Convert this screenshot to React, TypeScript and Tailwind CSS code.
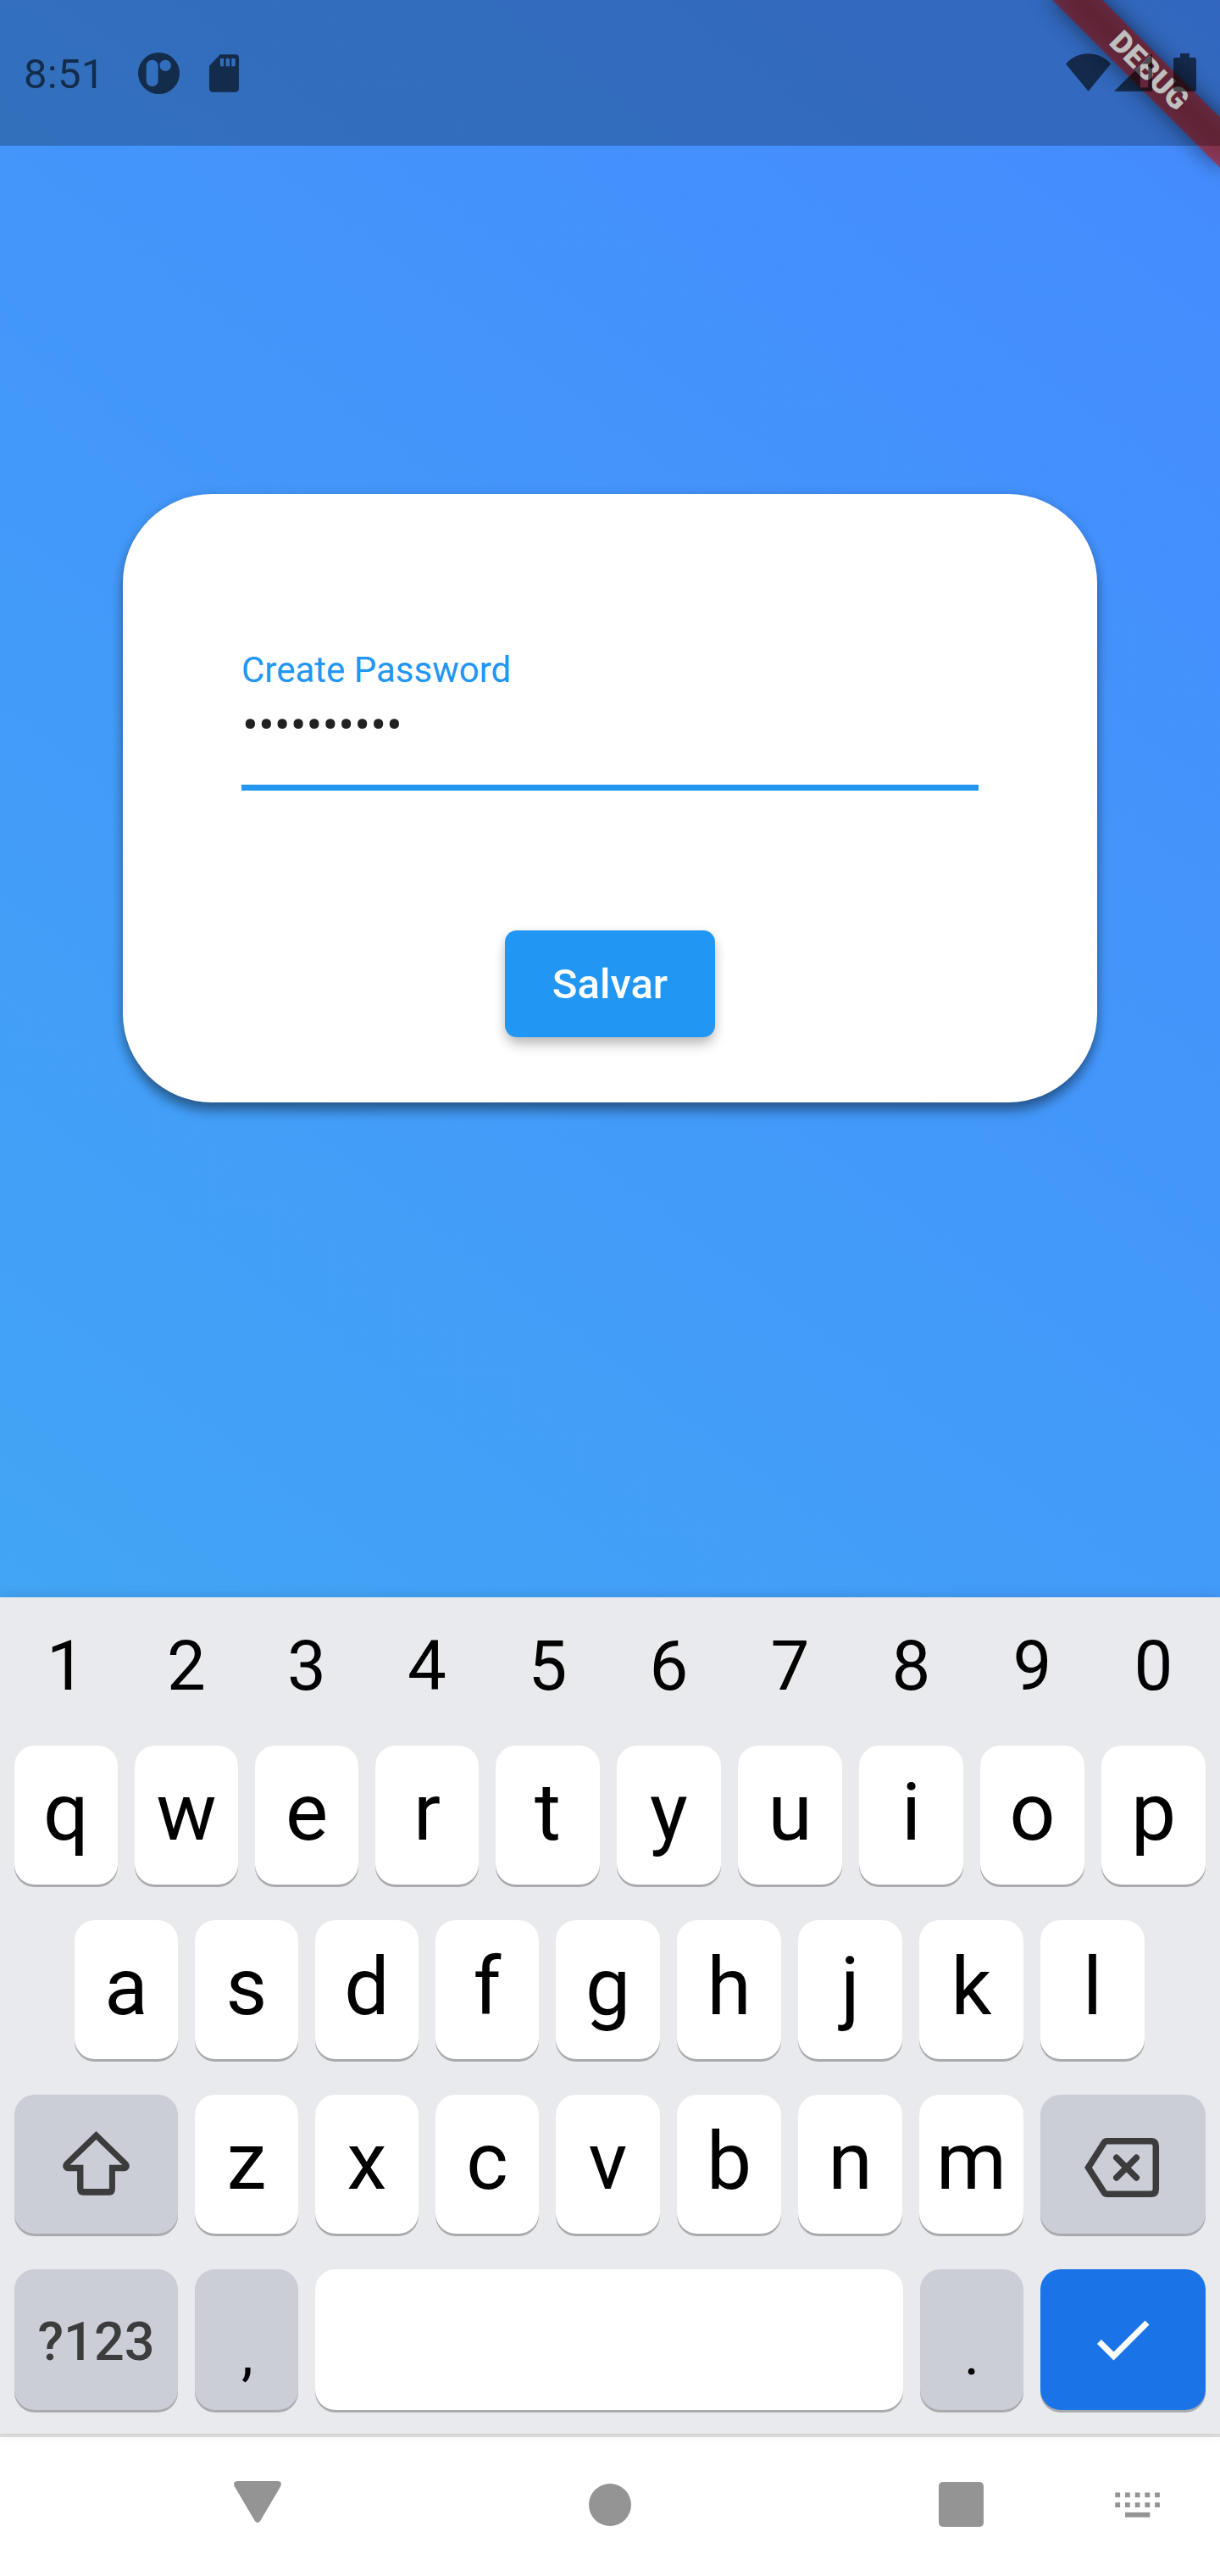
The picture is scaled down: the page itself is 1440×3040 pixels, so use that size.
import type { ReactNode } from "react";

const font = "font-['Roboto',sans-serif]";

type KeyTone = "light" | "gray" | "blue";

const tones: Record<KeyTone, string> = {
  light: "bg-white text-black",
  gray: "bg-[#cbced7] text-[#3c3c3c]",
  blue: "bg-[#1b73e8] text-white",
};

const NARROW = "w-[122px] shrink-0";
const WIDE = "w-[123px] shrink-0";

function Key({ children, tone = "light", size = "flex-1" }: { children?: ReactNode; tone?: KeyTone; size?: string }) {
  return (
    <div
      className={`flex h-full min-w-0 items-center justify-center rounded-3xl shadow-[0_3px_0_#a9aaad] ${tones[tone]} ${size}`}
    >
      {children}
    </div>
  );
}

function Letter({ children }: { children: string }) {
  return <span className="pb-[6px] text-[94.6px] leading-none">{children}</span>;
}

// Widths are whole pixels: the first `narrow` keys of a row are 122px, the others 123px.
function LetterRow({ letters, narrow = 4 }: { letters: string; narrow?: number }) {
  return (
    <>
      {letters.split("").map((c, i) => (
        <Key key={c} size={i < narrow ? NARROW : WIDE}>
          <Letter>{c}</Letter>
        </Key>
      ))}
    </>
  );
}

function StatusBar() {
  return (
    <div className="relative z-10 flex h-[172px] w-full items-start bg-black/25 text-black/60">
      <span className="ml-[28px] mt-[63px] w-[135px] text-[49px] leading-[50px] tracking-[0.3px]">8:51</span>
      <svg className="h-[49px] w-[49px] mt-[62px]" viewBox="0 0 147 147" fill="currentColor" fillRule="evenodd">
        <path d="M73.500 0a73.500 73.500 0 1 1 0 147a73.500 73.500 0 1 1 0 -147ZM50 26a21 21 0 0 0-21 21v52a21 21 0 0 0 42 0V47a21 21 0 0 0-21-21ZM96.500 26a20 20 0 1 0 0 40a20 20 0 1 0 0-40Z" />
      </svg>
      <svg className="ml-[35px] mt-[64px] h-[45px] w-[35px]" viewBox="0 0 105 133" fill="currentColor" fillRule="evenodd">
        <path d="M38 0H92Q105 0 105 13V120Q105 133 92 133H13Q0 133 0 120V40ZM39 14V42H51V14ZM59 14V42H72V14ZM79 14V42H92V14Z" />
      </svg>
      <div className="ml-auto mr-[28px] flex items-start">
        <svg className="mt-[63px] h-[45px] w-[53px]" viewBox="0 0 158 132" fill="currentColor">
          <path d="M79 132L0 36C24 10 51 0 79 0S134 10 158 36Z" />
        </svg>
        <svg className="ml-[4px] mt-[63px] h-[45px] w-[45px]" viewBox="0 0 134 132" fill="currentColor" fillRule="evenodd">
          <path d="M134 0V132H0ZM98 36L92 42V119H120V36Z" />
        </svg>
        <svg className="ml-[25px] mt-[63px] h-[45px] w-[27px]" viewBox="0 0 81 135" fill="currentColor">
          <path d="M24 0H57V15H73Q81 15 81 23V127Q81 135 73 135H8Q0 135 0 127V23Q0 15 8 15H24Z" />
        </svg>
      </div>
    </div>
  );
}

function DebugBanner() {
  return (
    <div className="absolute inset-0 overflow-hidden">
      <div className="absolute left-[1300px] top-[98px] h-[42px] w-[280px] origin-[140px_-98px] rotate-45">
        <div className="absolute inset-0 bg-black/50 blur-[14px]" />
        <div className="absolute inset-0 flex items-center justify-center bg-[#b71c1c]/63 text-[35.7px] font-black leading-none text-white">
          DEBUG
        </div>
      </div>
    </div>
  );
}

function PasswordCard() {
  return (
    <div className="ml-[145px] mt-[411px] flex h-[718px] w-[1150px] flex-col rounded-[105px] bg-white px-[140px] shadow-[0_11px_14px_-1px_rgba(0,0,0,0.36),0_2px_14px_rgba(0,0,0,0.16)]">
      <label className="mt-[187px] h-[42px] text-[42px] leading-none text-[#2196f3]">Create Password</label>
      <div className="mt-[16px] h-[56px] pl-px text-[56px] leading-none text-black/87">••••••••••</div>
      <div className="mt-[42px] h-[7px] w-full bg-[#2196f3]" />
      <button className="mx-auto mt-[165px] flex h-[126px] w-[248px] items-center justify-center rounded-[14px] bg-[#2196f3] pt-px text-[49px] font-medium leading-none text-white shadow-[0_10px_16px_-2px_rgba(0,0,0,0.24),0_2px_12px_rgba(0,0,0,0.1)]">
        Salvar
      </button>
    </div>
  );
}

function Keyboard() {
  return (
    <div className="relative flex h-[987px] w-full shrink-0 flex-col bg-[#e8eaed] px-[17px] shadow-[0_-1px_14px_rgba(0,0,0,0.12)]">
      <div className="flex h-[162px] gap-5 pt-[2px]">
        {"1234567890".split("").map((n, i) => (
          <span
            key={n}
            className={`flex items-center justify-center text-[81.6px] leading-none text-black ${i < 4 ? NARROW : WIDE}`}
          >
            {n}
          </span>
        ))}
      </div>
      <div className="mt-[13px] flex h-[164px] gap-5">
        <LetterRow letters="qwertyuiop" />
      </div>
      <div className="mt-[42px] flex h-[164px] gap-5 pl-[71px]">
        <LetterRow letters="asdfghjkl" />
      </div>
      <div className="mt-[42px] flex h-[164px] gap-5">
        <Key tone="gray" size="w-[193px] shrink-0">
          <svg className="mb-[2px] mr-px h-[76px] w-[79px]" viewBox="221 827 236 227" fill="currentColor" fillRule="evenodd">
            <path d="M339 827L451 936Q459 946 455 957Q450 968 438 968H406V1030Q406 1053 385 1053H294Q272 1053 272 1030V968H240Q228 968 223 957Q219 946 227 936ZM339 857L247 946H294V1030H385V946H431Z" />
          </svg>
        </Key>
        <LetterRow letters="zxcvbnm" narrow={3} />
        <Key tone="gray" size="w-[195px] shrink-0">
          <svg className="mr-[3px] mt-[7px] h-[72px] w-[90px]" viewBox="0 0 90 72" fill="none" stroke="currentColor" strokeWidth="7.500">
            <path d="M27.500 4.800H79.500Q85.300 4.800 85.300 10.600V61.400Q85.300 67.200 79.500 67.200H27.500Q25.600 67.200 24.300 65.500L5.500 36L24.300 6.500Q25.600 4.800 27.500 4.800Z" />
            <path d="M38.800 24.300L62.300 47.900M62.300 24.300L38.800 47.900" strokeLinecap="round" />
          </svg>
        </Key>
      </div>
      <div className="mt-[42px] flex h-[166px] gap-5">
        <Key tone="gray" size="w-[193px] shrink-0">
          <span className="mt-[5px] text-[63px] font-medium leading-none">?123</span>
        </Key>
        <Key tone="gray" size="w-[122px] shrink-0">
          <span className="ml-[2px] mt-[33px] text-[70px] leading-none text-black">,</span>
        </Key>
        <Key />
        <Key tone="gray" size="w-[122px] shrink-0">
          <span className="mt-[33px] text-[70px] leading-none text-black">.</span>
        </Key>
        <Key tone="blue" size="w-[195px] shrink-0">
          <svg className="mr-[2px] h-[84px] w-[84px]" viewBox="0 0 24 24" fill="currentColor">
            <path d="M9 16.170L4.830 12l-1.420 1.410L9 19 21 7l-1.410-1.410z" />
          </svg>
        </Key>
      </div>
    </div>
  );
}

function NavigationBar() {
  return (
    <div className="flex h-[168px] w-full items-start border-t-4 border-[#e0e0e0] bg-white text-[#949494]">
      <svg className="ml-[276px] mt-[52px] h-[49px] w-[56px]" viewBox="0 0 168 147" fill="currentColor">
        <path d="M12 0H156Q172 2 166 18L94 140Q84 154 74 140L2 18Q-4 2 12 0Z" />
      </svg>
      <div className="ml-[363px] mt-[55px] size-[50px] rounded-full bg-[#949494]" />
      <div className="ml-[363px] mt-[53px] size-[53px] rounded-[5px] bg-[#949494]" />
      <svg className="ml-[155px] mt-[65px] h-[30px] w-[54px]" viewBox="0 0 54 30" fill="currentColor">
        {[0, 1, 2, 3, 4].map((i) => (
          <path key={i} d={`M${i * 11.7 + 0.3} 0.500h5.800v5.800h-5.800zM${i * 11.7 + 0.3} 12.200h5.800v5.800h-5.800z`} />
        ))}
        <path d="M12 23.900h29.300v5.800H12z" />
      </svg>
    </div>
  );
}

export default function App() {
  return (
    <div className={`flex h-[3040px] w-[1440px] flex-col overflow-hidden ${font}`}>
      <main className="relative h-[1885px] w-full shrink-0 bg-[linear-gradient(217.38deg,#448aff,#42a5f5)]">
        <StatusBar />
        <PasswordCard />
        <DebugBanner />
      </main>
      <Keyboard />
      <NavigationBar />
    </div>
  );
}
